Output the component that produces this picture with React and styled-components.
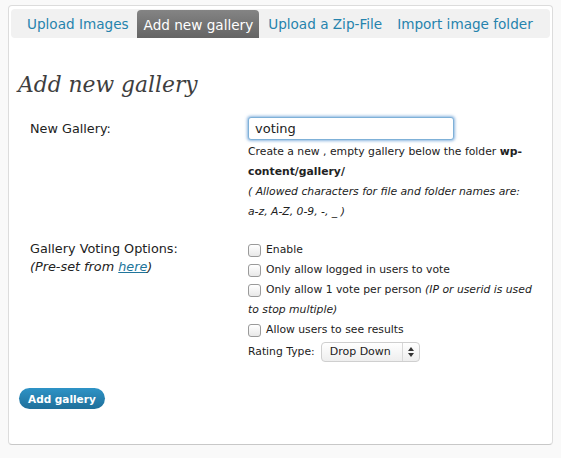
import React from 'react'
import styled, { createGlobalStyle } from 'styled-components'

const GlobalStyle = createGlobalStyle`
    body {
        margin: 0;
        background: #f9f9f9;
        font-family: "DejaVu Sans", sans-serif;
        color: #333;
    }
`

const Page = styled.div`
    padding: 5px 8px 9px 8px;
`

const Card = styled.div`
    background: #fff;
    border: 1px solid #dcdcdc;
    border-bottom-color: #c8c8c8;
    border-radius: 4px;
    padding: 3px 2px 0 2px;
    height: 440px;
    box-sizing: border-box;
`

const TabBar = styled.div`
    display: flex;
    align-items: flex-end;
    background: #f1f1f1;
    border-radius: 4px;
    height: 29px;
    padding-left: 9px;
    white-space: nowrap;
`

const Tab = styled.a`
    display: block;
    padding: 3px 6px 0 7px;
    height: ${p => (p.$active ? '25px' : '26px')};
    line-height: 25px;
    font-size: 13.6px;
    color: ${p => (p.$active ? '#fff' : '#2583ad')};
    background: ${p => (p.$active ? 'linear-gradient(#848484, #646464)' : 'transparent')};
    border-radius: 4px 4px 0 0;
    margin-right: 2px;
    text-decoration: none;
    cursor: pointer;
`

const Heading = styled.h2`
    font-family: "DejaVu Serif", Georgia, serif;
    font-style: italic;
    font-weight: normal;
    font-size: 21.8px;
    color: #3e3e3e;
    margin: 32px 0 0 7px;
    line-height: 30px;
`

const FormGrid = styled.div`
    display: grid;
    grid-template-columns: 218px 1fr;
    padding: 20px 10px 0 19px;
    row-gap: 18px;
`

const Label = styled.div`
    font-size: 12.8px;
    line-height: 18px;
    color: #222;
`

const Note = styled.em`
    display: block;
`

const Link = styled.a`
    color: #21759b;
    text-decoration: underline;
`

const Field = styled.div`
    font-size: 10.8px;
    line-height: 20px;
    color: #222;
`

const HelpLine = styled.div``

const TextInput = styled.input`
    width: 206px;
    height: 23px;
    box-sizing: border-box;
    border: 1px solid #7fb1d8;
    border-radius: 3px;
    box-shadow: 0 0 3px 1px rgba(90, 150, 210, 0.7);
    font-family: "DejaVu Sans", sans-serif;
    font-size: 13px;
    padding: 0 6px;
    margin: -10px 0 2px 0;
    outline: none;
    color: #222;
`

const Check = styled.label`
    display: flex;
    align-items: flex-start;
    gap: 5px;
`

const Box = styled.span`
    flex: none;
    width: 11px;
    height: 11px;
    margin-top: 4px;
    border: 1px solid #9a9a9a;
    border-radius: 3px;
    background: linear-gradient(#fff, #e8e8e8);
`

const SelectRow = styled.div`
    display: flex;
    align-items: center;
    gap: 6px;
    margin-top: 2px;
`

const Select = styled.div`
    display: flex;
    align-items: center;
    width: 99px;
    height: 20px;
    box-sizing: border-box;
    border: 1px solid #cfcfcf;
    border-radius: 4px;
    background: linear-gradient(#fff, #eee);
    font-size: 11px;
    color: #222;
`

const SelectText = styled.span`
    flex: 1;
    padding-left: 8px;
`

const SelectArrows = styled.span`
    width: 16px;
    height: 100%;
    border-left: 1px solid #d8d8d8;
    display: flex;
    align-items: center;
    justify-content: center;
`

const Button = styled.button`
    margin: 26px 0 0 8px;
    height: 21px;
    padding: 0 9px;
    border: none;
    border-radius: 11px;
    background: linear-gradient(#2e93c6, #1f6f9a);
    color: #fff;
    font-family: "DejaVu Sans", sans-serif;
    font-weight: bold;
    font-size: 10.5px;
    cursor: pointer;
`

const tabs = ['Upload Images', 'Add new gallery', 'Upload a Zip-File', 'Import image folder']

const options = [
    'Enable',
    'Only allow logged in users to vote',
]

export default function App() {
    return (
        <Page>
            <GlobalStyle />
            <Card>
                <TabBar>
                    {tabs.map(t => (
                        <Tab key={t} $active={t === 'Add new gallery'}>{t}</Tab>
                    ))}
                </TabBar>
                <Heading>Add new gallery</Heading>
                <FormGrid>
                    <Label>New Gallery:</Label>
                    <Field>
                        <TextInput defaultValue="voting" />
                        <HelpLine>Create a new , empty gallery below the folder <b>wp-</b></HelpLine>
                        <HelpLine><b>content/gallery/</b></HelpLine>
                        <HelpLine><i>( Allowed characters for file and folder names are:</i></HelpLine>
                        <HelpLine><i>a-z, A-Z, 0-9, -, _ )</i></HelpLine>
                    </Field>

                    <Label>
                        Gallery Voting Options:
                        <Note>(Pre-set from <Link>here</Link>)</Note>
                    </Label>
                    <Field>
                        {options.map(o => (
                            <Check key={o}><Box />{o}</Check>
                        ))}
                        <Check>
                            <Box />
                            <span>Only allow 1 vote per person <i>(IP or userid is used</i></span>
                        </Check>
                        <HelpLine><i>to stop multiple)</i></HelpLine>
                        <Check><Box />Allow users to see results</Check>
                        <SelectRow>
                            Rating Type:
                            <Select>
                                <SelectText>Drop Down</SelectText>
                                <SelectArrows>
                                    <svg width="6" height="10" viewBox="0 0 6 10">
                                        <path d="M0 4 L3 0 L6 4 Z M0 6 L3 10 L6 6 Z" fill="#333" />
                                    </svg>
                                </SelectArrows>
                            </Select>
                        </SelectRow>
                    </Field>
                </FormGrid>
                <Button>Add gallery</Button>
            </Card>
        </Page>
    )
}
